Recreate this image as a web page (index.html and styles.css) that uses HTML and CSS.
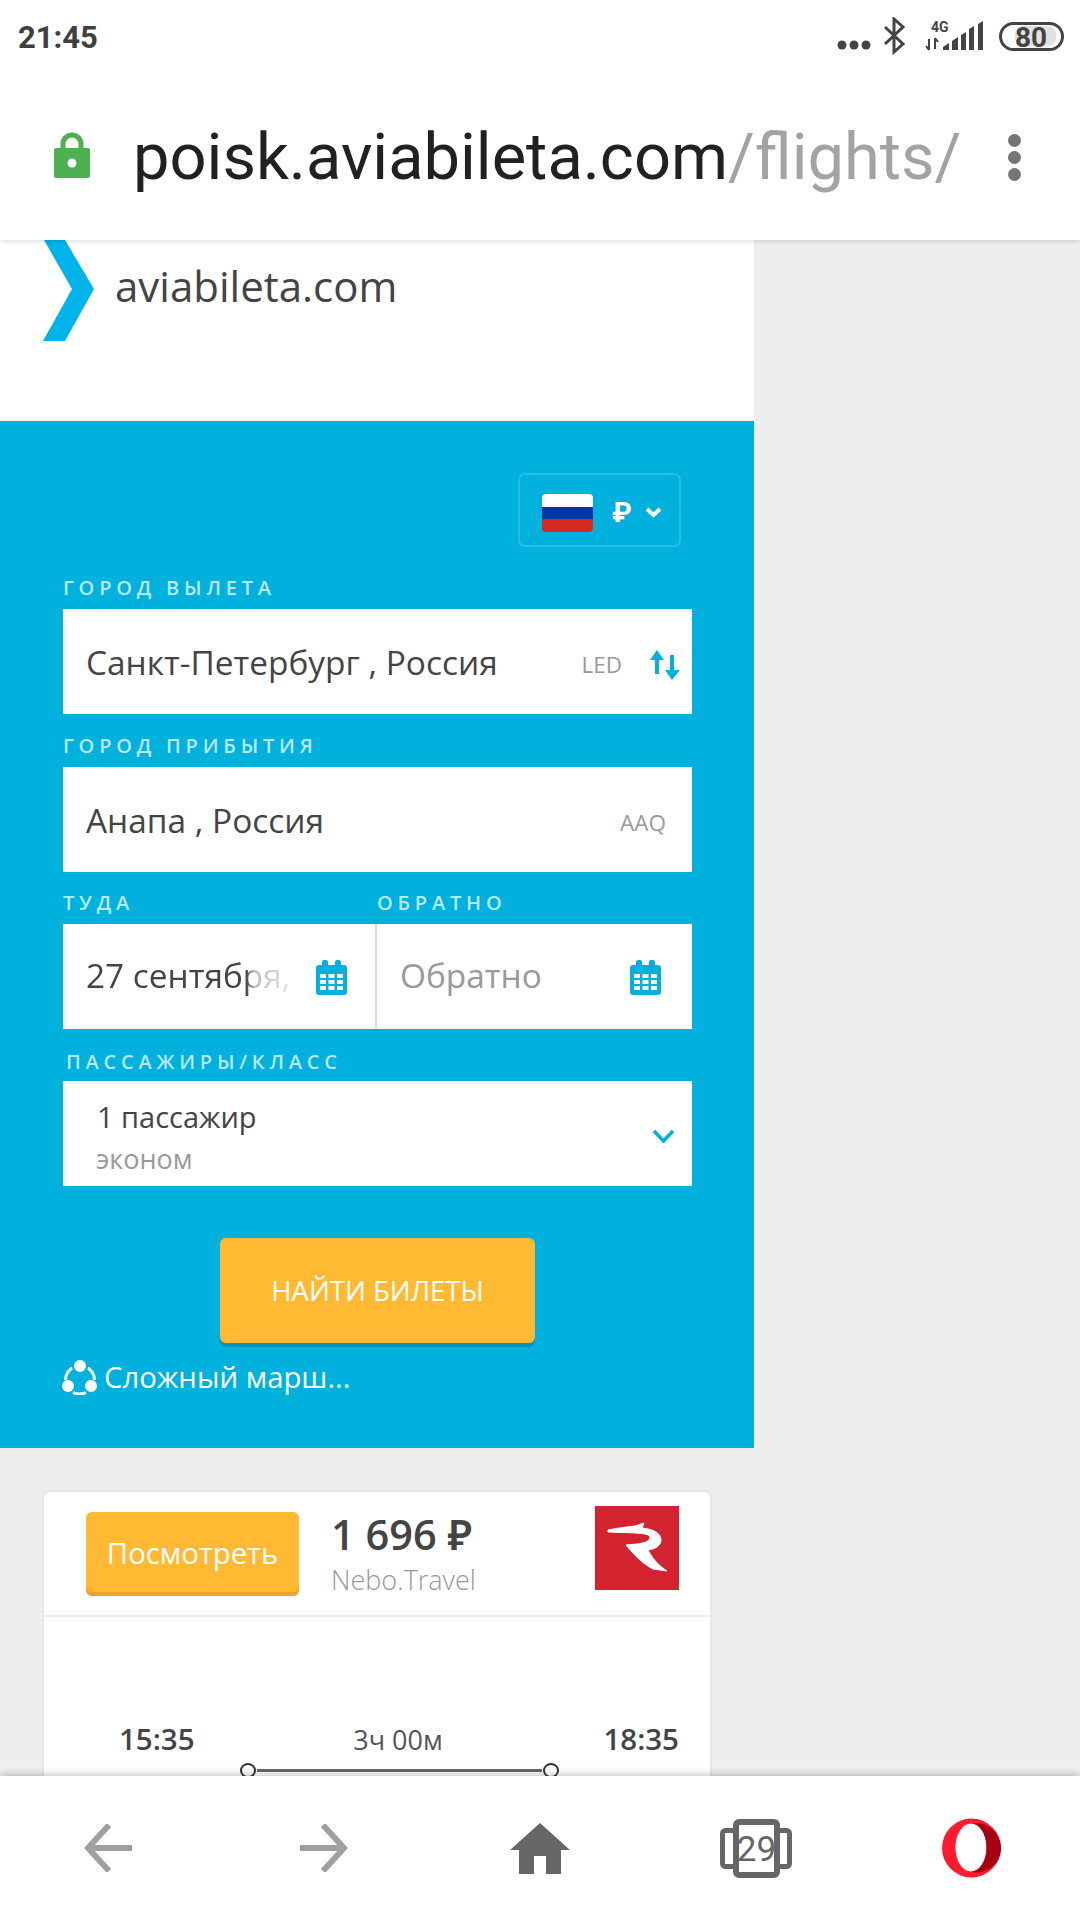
FILE: index.html
```html
<!DOCTYPE html>
<html lang="ru">
<head>
<meta charset="utf-8">
<title>aviabileta.com</title>
<link rel="stylesheet" href="styles.css">
</head>
<body>
<div class="screen">
  <header class="chrome">
    <div class="status">
      <span class="clock">21:45</span>
      <svg class="status-icons" width="230" height="40" viewBox="837 17 230 40">
        <g fill="#444"><circle cx="842" cy="45" r="4.500"/><circle cx="854" cy="45" r="4.500"/><circle cx="866" cy="45" r="4.500"/></g>
        <path d="M885 27l18 17-9 8V19l9 8-18 17" fill="none" stroke="#444" stroke-width="3"/>
        <text x="931" y="32" class="net">4G</text>
        <path d="M929 39v11M929 50l-3-4M935 49V38M935 38l3 4" fill="none" stroke="#444" stroke-width="2"/>
        <path d="M943 50v-3l6-4v7zM952 50v-9l6-4v13zM961 50V35l5-3v18zM969 50V29l5-3v24zM978 50V24l5-3v29z" fill="#444"/>
        <rect x="1015" y="26" width="41" height="20" rx="8" fill="#e2e2e2"/>
        <rect x="1000.500" y="23.500" width="62" height="26" rx="13" fill="none" stroke="#444" stroke-width="3"/>
        <text x="1031" y="47" text-anchor="middle" class="batt">80</text>
      </svg>
    </div>
    <div class="toolbar">
      <svg class="lock" width="36" height="46" viewBox="0 0 36 46">
        <path d="M9 20v-8a9 9 0 0 1 18 0v8" fill="none" stroke="#4caf50" stroke-width="5"/>
        <path d="M2 16h32a2 2 0 0 1 2 2v26a2 2 0 0 1-2 2H2a2 2 0 0 1-2-2V18a2 2 0 0 1 2-2z" fill="#4caf50"/>
        <circle cx="18" cy="31" r="4.500" fill="#fff"/>
      </svg>
      <div class="url"><span class="host">poisk.aviabileta.com</span><span class="path">/flights/</span></div>
      <div class="kebab"><i></i><i></i><i></i></div>
    </div>
  </header>

  <main class="viewport">
    <div class="page">
      <div class="brand">
        <svg class="chevron" width="51" height="101" viewBox="0 0 51 101"><path d="M1 0h21l29 49-29 52H0l29-52z" fill="#00b3ea"/></svg>
        <span class="brand-name">aviabileta.com</span>
      </div>
      <section class="search">
        <div class="currency-row">
          <div class="currency">
            <div class="flag"><i class="w"></i><i class="b"></i><i class="r"></i></div>
            <span class="rub">₽</span>
            <svg width="17" height="11" viewBox="0 0 17 11"><path d="M2 2l6.500 6L15 2" fill="none" stroke="#fff" stroke-width="4"/></svg>
          </div>
        </div>
        <form class="form">
          <div class="label label-first">ГОРОД ВЫЛЕТА</div>
          <div class="field">
            <span class="value">Санкт-Петербург , Россия</span>
            <span class="code code-swap">LED</span>
            <svg class="swap" width="30" height="32" viewBox="0 0 30 32"><path d="M7 25V8M22 6v17" fill="none" stroke="#00b1de" stroke-width="4"/><path d="M0 11 7 1l7 10zM15 21l7 10 8-10z" fill="#00b1de"/></svg>
          </div>
          <div class="label">ГОРОД ПРИБЫТИЯ</div>
          <div class="field">
            <span class="value">Анапа , Россия</span>
            <span class="code">AAQ</span>
          </div>
          <div class="label-pair">
            <div class="label">ТУДА</div>
            <div class="label">ОБРАТНО</div>
          </div>
          <div class="dates">
            <div class="date date-from">
              <span class="value value-fade">27 сентября,</span>
              <svg class="cal" width="31" height="35" viewBox="0 0 31 35"><use href="#cal"/></svg>
            </div>
            <div class="date date-to">
              <span class="value placeholder">Обратно</span>
              <svg class="cal" width="31" height="35" viewBox="0 0 31 35"><use href="#cal"/></svg>
            </div>
          </div>
          <div class="label label-pax">ПАССАЖИРЫ/КЛАСС</div>
          <div class="field field-pax">
            <div class="pax">
              <span class="pax-count">1 пассажир</span>
              <span class="pax-class">эконом</span>
            </div>
            <svg class="pax-chev" width="23" height="14" viewBox="0 0 23 14"><path d="M2 2l9.500 10L21 2" fill="none" stroke="#00b1de" stroke-width="3.500"/></svg>
          </div>
          <div class="find"><button type="button" class="find-btn">НАЙТИ БИЛЕТЫ</button></div>
          <div class="route">
            <svg width="36" height="36" viewBox="0 0 36 36">
              <g fill="#fff"><circle cx="18" cy="7" r="6"/><circle cx="6" cy="27" r="6"/><circle cx="29" cy="27" r="6"/></g>
              <path d="M10 9A15 15 0 0 0 3.500 21M26 9A15 15 0 0 1 32.500 21M11 33.500a15 15 0 0 0 13 0" fill="none" stroke="#fff" stroke-width="3"/>
            </svg>
            <span>Сложный марш...</span>
          </div>
        </form>
      </section>
      <article class="card">
        <div class="card-top">
          <button type="button" class="view-btn">Посмотреть</button>
          <div class="offer">
            <div class="price">1 696 ₽</div>
            <div class="agent">Nebo.Travel</div>
          </div>
          <svg class="airline" width="84" height="84" viewBox="0 0 84 84">
            <rect width="84" height="84" fill="#d2232e"/>
            <path d="M13 24C22 22 32 21 40 20L49 17 47 22C58 23 66 27 66 34 66 40 60 43 53 44 57 52 64 60 72 65L58 63C48 58 38 48 31 39 40 38 55 38 55 31 55 26 30 27 13 26z" fill="#fff" stroke="#fff"/>
          </svg>
        </div>
        <div class="leg">
          <div class="times">
            <span class="time">15:35</span>
            <span class="duration">3ч 00м</span>
            <span class="time">18:35</span>
          </div>
          <div class="track"><i class="stop"></i><i class="line"></i><i class="stop"></i></div>
        </div>
      </article>
    </div>
  </main>

  <footer class="navbar">
    <svg width="48" height="48" viewBox="0 0 48 48"><path d="M48 24H5M25 1 4 24l21 23" fill="none" stroke="#a0a0a0" stroke-width="6"/></svg>
    <svg width="48" height="48" viewBox="0 0 48 48"><path d="M0 24h43M23 1l21 23-21 23" fill="none" stroke="#a0a0a0" stroke-width="6"/></svg>
    <svg width="60" height="51" viewBox="0 0 60 51"><path d="M30 0l30 27h-9v24H36V33H24v18H9V27H0z" fill="#666"/></svg>
    <svg width="72" height="59" viewBox="0 0 72 59">
      <rect x="2.500" y="11.500" width="18" height="36" rx="3" fill="#fff" stroke="#666" stroke-width="5"/>
      <rect x="51.500" y="11.500" width="18" height="36" rx="3" fill="#fff" stroke="#666" stroke-width="5"/>
      <rect x="16" y="3" width="41" height="53" rx="3" fill="#fff" stroke="#666" stroke-width="6"/>
      <text x="36.500" y="42" text-anchor="middle" class="tabs">29</text>
    </svg>
    <svg width="60" height="60" viewBox="0 0 60 60">
      <circle cx="29.500" cy="30" r="29.500" fill="#ff1b2d"/>
      <ellipse cx="29" cy="29.500" rx="15.500" ry="24" fill="#fff"/>
      <path d="M29 5.500C45 2 59 15 59 30 59 45 45 58 29 53.500 38 53.500 44.500 43 44.500 29.500 44.500 16 38 5.500 29 5.500z" fill="#a70014"/>
    </svg>
  </footer>
</div>
<svg class="defs" width="0" height="0">
  <symbol id="cal" viewBox="0 0 31 35">
    <path d="M3 5h3V2a2 2 0 0 1 2-2h2a2 2 0 0 1 2 2v3h7V2a2 2 0 0 1 2-2h2a2 2 0 0 1 2 2v3h3a3 3 0 0 1 3 3v24a3 3 0 0 1-3 3H3a3 3 0 0 1-3-3V8a3 3 0 0 1 3-3z" fill="#00b1de"/>
    <path d="M4 14h6v4H4zM12.500 14h6v4h-6zM21 14h6v4h-6zM4 20h6v4H4zM12.500 20h6v4h-6zM21 20h6v4h-6zM4 26h6v4H4zM12.500 26h6v4h-6zM21 26h6v4h-6z" fill="#fff"/>
  </symbol>
</svg>
</body>
</html>
```
FILE: styles.css
```css
* { box-sizing: border-box; }
html, body { margin: 0; padding: 0; }
body { font-family: "Open Sans", "Noto Sans", sans-serif; color: #444; background: #eee; }
i { display: block; }
.defs { display: block; height: 0; }

.screen { width: 1080px; height: 1920px; display: flex; flex-direction: column; overflow: hidden; }

.chrome { height: 240px; flex: none; background: #fff; position: relative; z-index: 2; box-shadow: 0 1px 5px rgba(0,0,0,.16); display: flex; flex-direction: column; font-family: Roboto, sans-serif; }
.status { height: 74px; display: flex; align-items: center; justify-content: space-between; padding: 0 13px 0 18px; }
.clock { font-size: 31px; font-weight: 700; color: #3f3f3f; }
.status-icons { display: block; }
.net { font: 700 14px Roboto, sans-serif; fill: #444; }
.batt { font: 700 28px Roboto, sans-serif; fill: #444; }

.toolbar { flex: 1; display: flex; align-items: center; padding: 0 0 4px 54px; }
.lock { flex: none; }
.url { margin: 4px 0 0 43px; width: 875px; font-size: 65px; white-space: nowrap; line-height: 1; }
.host { color: #212121; }
.path { color: #a3a3a3; }
.kebab { display: flex; flex-direction: column; gap: 4px; margin-top: 4px; }
.kebab i { width: 13px; height: 13px; border-radius: 50%; background: #757575; }

.viewport { flex: 1; min-height: 0; overflow: hidden; }
.page { width: 754px; background: #eee; }

.brand { height: 181px; background: #fff; display: flex; align-items: flex-start; padding-left: 43px; }
.chevron { flex: none; }
.brand-name { margin: 18px 0 0 21px; font-size: 42px; line-height: 56px; color: #444; font-weight: 400; }

.search { background: #00b1de; height: 1027px; padding-top: 52px; }
.currency-row { display: flex; justify-content: flex-end; padding-right: 73px; }
.currency { width: 163px; height: 74px; border: 2px solid rgba(255,255,255,.14); border-radius: 7px; display: flex; align-items: center; padding: 5px 0 0 22px; }
.flag { width: 51px; height: 38px; border-radius: 4px; overflow: hidden; display: flex; flex-direction: column; }
.flag .w { height: 13px; background: #fff; }
.flag .b { height: 12px; background: #0039a6; }
.flag .r { height: 13px; background: #d52b1e; }
.rub { color: #fff; font: 700 28px Roboto, sans-serif; margin: 0 13px 0 19px; }

.form { padding: 0 62px 0 63px; }
.label { height: 53px; padding-top: 22px; font-size: 20px; line-height: 20px; letter-spacing: 4.800px; font-weight: 600; color: #b9e9f6; white-space: nowrap; }
.label-first { height: 62px; padding-top: 31px; }
.label-pax { height: 52px; padding-left: 3px; padding-top: 23px; }
.label-pair { display: grid; grid-template-columns: 314px 1fr; height: 52px; }
.label-pair .label { height: 52px; padding-top: 21px; }

.field { height: 105px; background: #fff; display: flex; align-items: center; padding: 0 26px 0 23px; }
.value { font-size: 33.400px; line-height: 44px; color: #444; white-space: nowrap; }
.code { margin-left: auto; margin-top: 5px; font-size: 22.500px; color: #999; }
.code-swap { margin-right: 28px; }
.swap { flex: none; margin: 6px -14px 0 0; }

.dates { height: 105px; background: #fff; display: grid; grid-template-columns: 314px 1fr; }
.date { display: flex; align-items: center; justify-content: space-between; padding: 0 31px 0 23px; }
.date .value { margin-top: -3px; }
.date-from { border-right: 2px solid #ddd; padding-right: 28px; }
.date-to { padding-left: 23px; }
.value-fade { width: 203px; overflow: hidden; -webkit-mask-image: linear-gradient(90deg, #000 79%, rgba(0,0,0,.35) 83%, rgba(0,0,0,.15) 100%); mask-image: linear-gradient(90deg, #000 79%, rgba(0,0,0,.35) 83%, rgba(0,0,0,.15) 100%); }
.placeholder { color: #999; }
.cal { flex: none; margin-top: 2px; }

.field-pax { padding: 0 17px 0 34px; justify-content: space-between; }
.pax { display: flex; flex-direction: column; padding-top: 9px; }
.pax-count { font-size: 29px; line-height: 38px; color: #444; }
.pax-class { font-size: 27px; line-height: 38px; margin-top: 4px; color: #999; margin-left: -1px; }
.pax-chev { margin-top: 5px; }

.find { display: flex; justify-content: center; padding: 52px 0 0; }
.find-btn { width: 315px; height: 105px; border: 0; border-radius: 6px; background: #ffb932; color: #fff; font: 400 27.500px "Open Sans", sans-serif; box-shadow: 0 4px 0 rgba(0,120,160,.5); }
.route { display: flex; align-items: center; gap: 6px; margin-left: -1px; color: #fff; font-size: 29.300px; line-height: 40px; margin-top: 14px; }

.card { width: 670px; margin: 42px 0 0 42px; height: 340px; background: #fff; border: 2px solid #e6e6e6; border-radius: 8px; }
.card-top { height: 125px; border-bottom: 2px solid #eee; display: flex; align-items: flex-start; padding: 14px 31px 0 42px; }
.view-btn { width: 213px; height: 84px; margin-top: 6px; border: 0; border-radius: 6px; background: #ffb932; box-shadow: inset 0 -4px 0 #e9a52b; color: #fff; font: 400 29.300px "Open Sans", sans-serif; padding: 0 0 3px; }
.offer { margin-left: 32px; flex: 1; }
.price { font-size: 41.500px; font-weight: 600; line-height: 50px; margin-top: 3px; color: #444; white-space: nowrap; }
.agent { font-size: 27px; font-weight: 300; line-height: 36px; margin-top: 3px; color: #999; }
.airline { flex: none; }

.leg { padding: 101px 31px 0 75px; }
.times { display: flex; justify-content: space-between; align-items: center; }
.time { font-size: 29.500px; font-weight: 600; line-height: 38px; color: #444; }
.duration { font-size: 27px; line-height: 38px; color: #555; margin: 3px 0 0 -2px; }
.track { display: flex; align-items: center; margin: 4px 120px 0 121px; }
.stop { width: 16px; height: 15px; border: 2.500px solid #333; border-radius: 50%; flex: none; }
.line { flex: 1; height: 3px; background: #666; margin: 0 1px; }

.navbar { height: 144px; flex: none; background: #fff; position: relative; z-index: 2; box-shadow: 0 -2px 7px rgba(0,0,0,.22); display: grid; grid-template-columns: repeat(5, 216px); place-items: center; }
.tabs { font: 400 35px Roboto, sans-serif; fill: #666; }
```
